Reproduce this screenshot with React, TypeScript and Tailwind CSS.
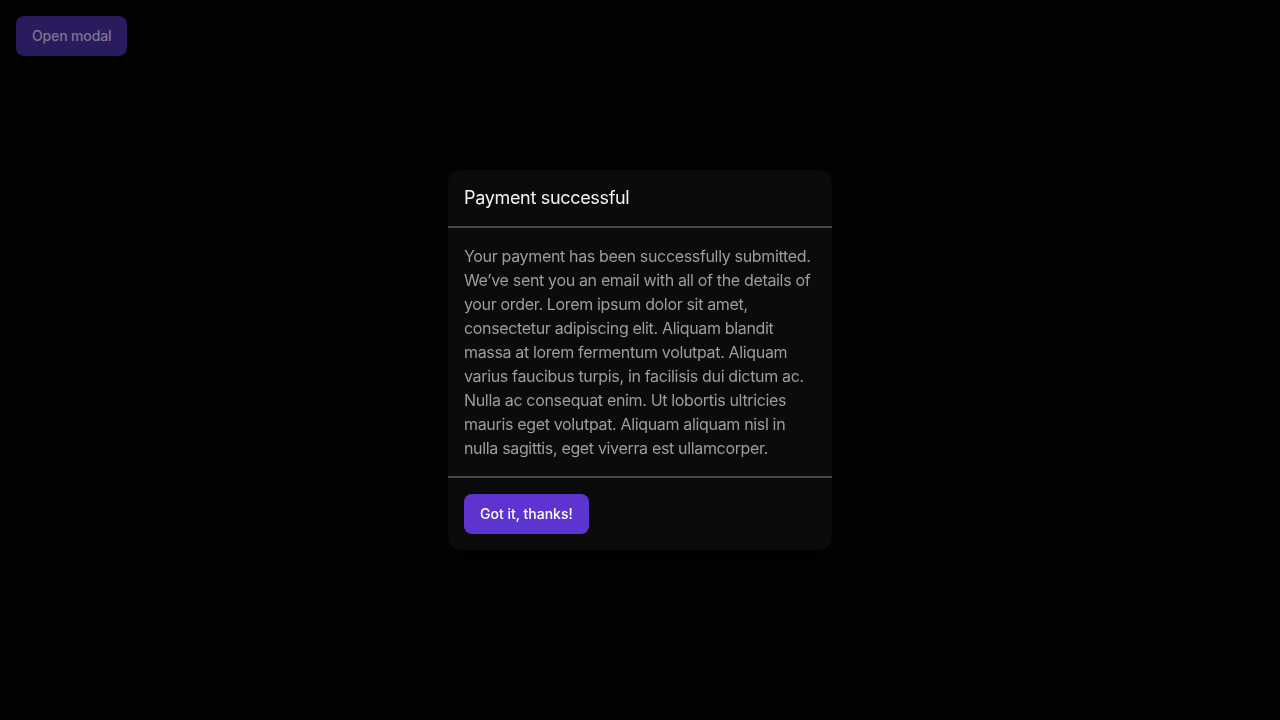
const App = () => {
  return (
    <div className="relative min-h-screen w-full bg-[#030303] font-['Inter',sans-serif]">
      <div className="p-4">
        <button className="h-10 rounded-lg bg-[#2a1a5e] px-4 text-sm font-medium tracking-[-0.01em] text-[#7b7690]">
          Open modal
        </button>
      </div>

      {/* modal */}
      <div className="fixed inset-0 flex items-center justify-center">
        <div className="w-96 rounded-xl bg-[#0b0b0b] shadow-[0_20px_25px_-5px_rgba(0,0,0,0.7),0_8px_10px_-6px_rgba(0,0,0,0.7)]">
          <div className="border-b-2 border-[#474747] p-4">
            <h2 className="text-lg leading-6 tracking-[-0.018em] text-[#f2f2f2]">Payment successful</h2>
          </div>
          <div className="border-b-2 border-[#474747] p-4">
            <p className="text-base leading-6 tracking-[-0.021em] text-[#9d9d9d]">
              Your payment has been successfully submitted. We’ve sent you an email with all of the
              details of your order. Lorem ipsum dolor sit amet, consectetur adipiscing elit.
              Aliquam blandit massa at lorem fermentum volutpat. Aliquam varius faucibus turpis, in
              facilisis dui dictum ac. Nulla ac consequat enim. Ut lobortis ultricies mauris eget
              volutpat. Aliquam aliquam nisl in nulla sagittis, eget viverra est ullamcorper.
            </p>
          </div>
          <div className="p-4">
            <button className="h-10 rounded-lg bg-[#5e34d0] px-4 text-sm font-medium text-white">
              Got it, thanks!
            </button>
          </div>
        </div>
      </div>
    </div>
  )
}

export default App
